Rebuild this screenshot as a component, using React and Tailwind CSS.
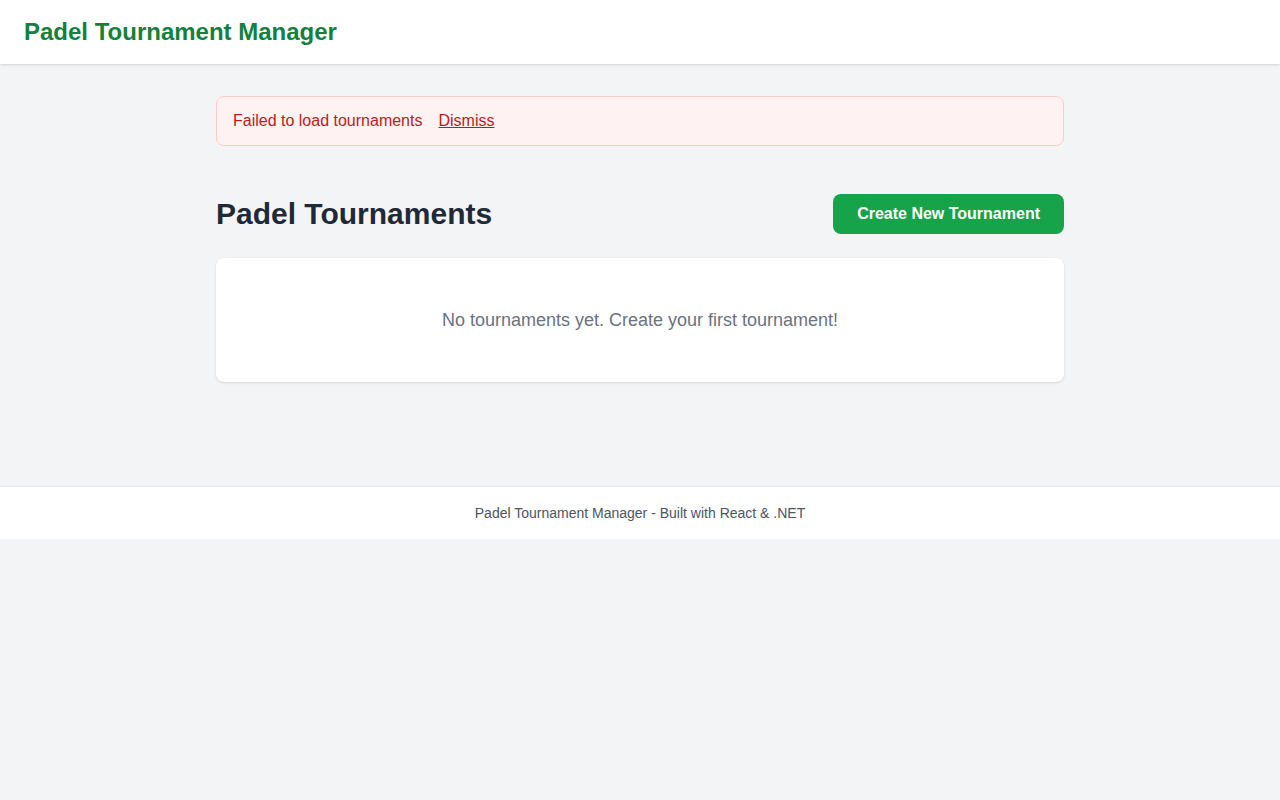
const App = () => {
  return (
    <div className="min-h-screen bg-[#f3f4f6] font-['Liberation_Sans',Arial,sans-serif]">
      <header className="bg-white shadow">
        <div className="px-6 h-16 flex items-center">
          <h1 className="text-2xl font-bold text-[#15803d]">
            Padel Tournament Manager
          </h1>
        </div>
      </header>

      <main className="max-w-4xl mx-auto px-6 pt-8 pb-[104px]">
        <div className="mb-12 px-4 py-3 bg-[#fef2f2] border border-[#fecaca] rounded-lg text-[#b91c1c]">
          Failed to load tournaments
          <button className="ml-4 underline">Dismiss</button>
        </div>

        <div className="flex items-center justify-between mb-6">
          <h2 className="text-3xl font-bold text-[#1f2937]">
            Padel Tournaments
          </h2>
          <button className="px-6 py-2 bg-[#16a34a] text-white font-bold rounded-lg">
            Create New Tournament
          </button>
        </div>

        <div className="bg-white rounded-lg shadow p-12 text-center">
          <p className="text-lg text-[#6b7280]">
            No tournaments yet. Create your first tournament!
          </p>
        </div>
      </main>

      <footer className="bg-white border-t border-[#e5e7eb] py-4 text-center text-sm text-[#4b5563]">
        Padel Tournament Manager - Built with React &amp; .NET
      </footer>
    </div>
  );
};

export default App;
